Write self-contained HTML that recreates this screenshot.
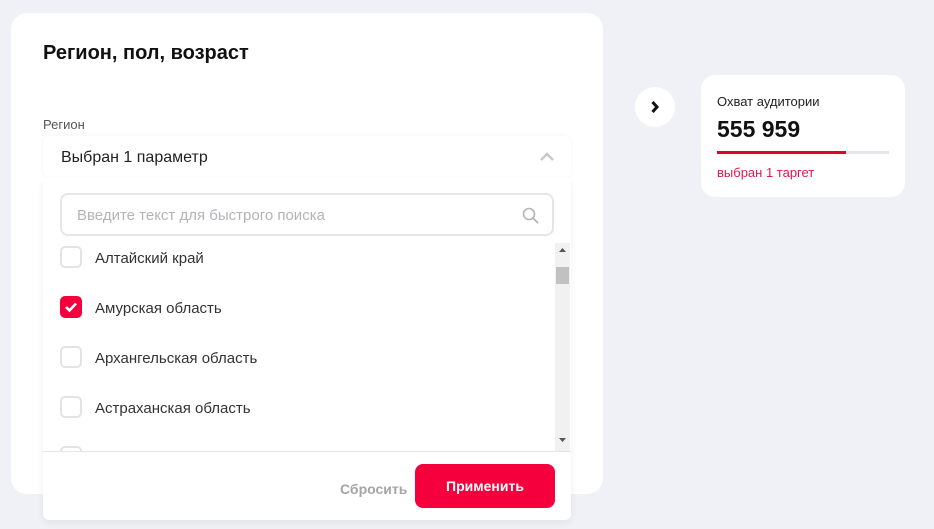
<!DOCTYPE html>
<html><head><meta charset="utf-8"><style>
*{box-sizing:border-box;margin:0;padding:0}
body{width:934px;height:529px;background:#f0f1f6;font-family:"Liberation Sans",sans-serif;position:relative;overflow:hidden;color:#1d1d1f}
.card{position:absolute;left:11px;top:13px;width:592px;height:481px;background:#fff;border-radius:16px}
h1{position:absolute;left:43px;top:42px;font-size:20px;font-weight:bold;color:#111}
.lbl{position:absolute;left:43px;top:117px;font-size:13px;color:#555}
.dd{position:absolute;left:43px;top:136px;width:528px;height:42px;background:#fff;border-radius:8px;box-shadow:0 0 6px rgba(0,0,0,.05)}
.dd span{position:absolute;left:18px;top:13px;font-size:16px;color:#222}
.panel{position:absolute;left:43px;top:178px;width:528px;height:342px;background:#fff;border-radius:0 0 6px 6px;box-shadow:0 3px 8px rgba(0,0,0,.06);overflow:hidden}
.search{position:absolute;left:17px;top:15px;width:494px;height:43px;border:2px solid #e6e6ea;border-radius:8px}
.search span{position:absolute;left:15px;top:12px;font-size:15px;color:#b4b4b8}
.list{position:absolute;left:0;top:65px;width:528px;height:208px;overflow:hidden}
.it{position:absolute;left:17px;height:22px;width:480px}
.cb{position:absolute;left:0;top:0;width:22px;height:22px;border:2px solid #e3e3e6;border-radius:5px}
.cb.on{background:#f5003c;border-color:#f5003c}
.it span{position:absolute;left:35px;top:4px;font-size:15px;color:#333}
.sb{position:absolute;left:512px;top:65px;width:15px;height:208px;background:#f1f1f1}
.foot{position:absolute;left:0;top:273px;width:528px;height:1px;background:#e6e6e6}
.reset{position:absolute;left:297px;top:303px;font-size:14px;font-weight:bold;color:#a5a5a8}
.apply{position:absolute;left:372px;top:286px;width:140px;height:44px;background:#f5003c;border-radius:8px;color:#fff;font-weight:bold;font-size:14px;text-align:center;line-height:44px}
.circ{position:absolute;left:635px;top:87px;width:40px;height:40px;border-radius:50%;background:#fff}
.rc{position:absolute;left:701px;top:75px;width:204px;height:122px;background:#fff;border-radius:14px}
</style></head><body>
<div class="card"></div>
<h1>Регион, пол, возраст</h1>
<div class="lbl">Регион</div>
<div class="dd"><span>Выбран 1 параметр</span>
<svg style="position:absolute;left:496px;top:16px" width="16" height="10"><path d="M2 8 L8 2 L14 8" fill="none" stroke="#c8c8cc" stroke-width="2.5"/></svg></div>
<div class="panel">
<div class="search"><span>Введите текст для быстрого поиска</span>
<svg style="position:absolute;left:460px;top:12px" width="18" height="18"><circle cx="7" cy="7" r="5.5" fill="none" stroke="#b4b4b8" stroke-width="1.6"/><path d="M11 11 L16 16" stroke="#b4b4b8" stroke-width="1.8"/></svg></div>
<div class="list">
<div class="it" style="top:3px"><div class="cb"></div><span>Алтайский край</span></div>
<div class="it" style="top:53px"><div class="cb on"><svg width="18" height="18" style="position:absolute;left:0;top:0"><path d="M4 9 L7.5 12.5 L14 5.5" fill="none" stroke="#fff" stroke-width="2.6"/></svg></div><span>Амурская область</span></div>
<div class="it" style="top:103px"><div class="cb"></div><span>Архангельская область</span></div>
<div class="it" style="top:153px"><div class="cb"></div><span>Астраханская область</span></div>
<div class="it" style="top:203px"><div class="cb"></div></div>
</div>
<div class="sb"><svg width="15" height="208"><path d="M4 9 L7.5 5 L11 9Z" fill="#555"/><rect x="1" y="24" width="13" height="17" fill="#c1c1c1"/><path d="M4 195 L7.5 199 L11 195Z" fill="#555"/></svg></div>
<div class="foot"></div>
<div class="reset">Сбросить</div>
<div class="apply">Применить</div>
</div>
<div class="circ"><svg width="40" height="40"><path d="M17.5 15 L22 20 L17.5 25" fill="none" stroke="#111" stroke-width="3"/></svg></div>
<div class="rc">
<div style="position:absolute;left:16px;top:19px;font-size:13px;color:#222">Охват аудитории</div>
<div style="position:absolute;left:16px;top:41px;font-size:23px;color:#111;font-weight:bold">555 959</div>
<div style="position:absolute;left:16px;top:76px;width:172px;height:3px;background:#e6e6ea"></div>
<div style="position:absolute;left:16px;top:76px;width:129px;height:3px;background:#e4002e"></div>
<div style="position:absolute;left:16px;top:90px;font-size:13px;color:#e4164a">выбран 1 таргет</div>
</div>
</body></html>
